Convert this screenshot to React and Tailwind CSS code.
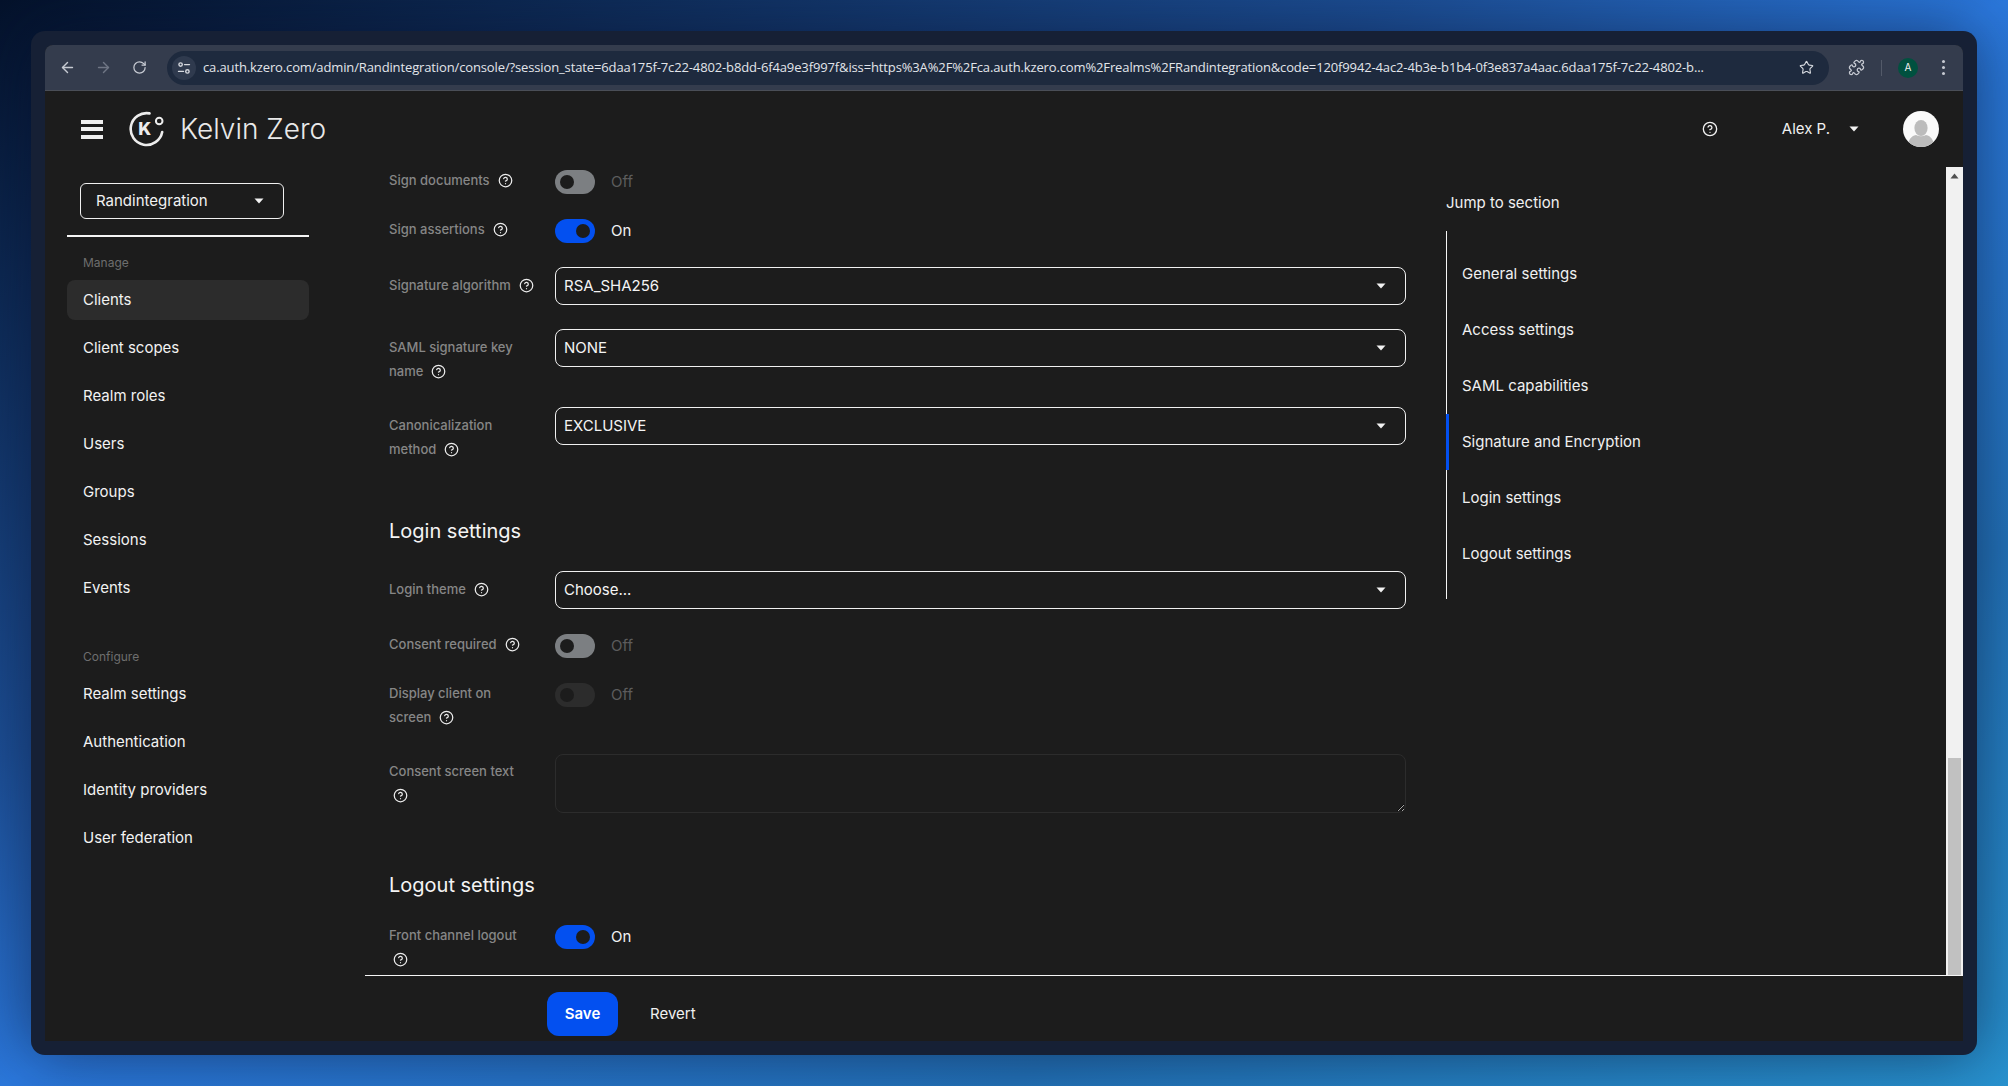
import React from "react";
import { ArrowLeft, ArrowRight, RotateCw, Star, Puzzle, CircleHelp } from "lucide-react";

const URL_TEXT =
  "ca.auth.kzero.com/admin/Randintegration/console/?session_state=6daa175f-7c22-4802-b8dd-6f4a9e3f997f&iss=https%3A%2F%2Fca.auth.kzero.com%2Frealms%2FRandintegration&code=120f9942-4ac2-4b3e-b1b4-0f3e837a4aac.6daa175f-7c22-4802-b...";

function Caret({ className = "" }) {
  return (
    <svg width="10" height="6" viewBox="0 0 10 6" className={className}>
      <path d="M0.5 0.5h9L5 5.5z" fill="#f2f2f2" />
    </svg>
  );
}

function Help({ className = "" }) {
  return <CircleHelp size={15} strokeWidth={2} className={"shrink-0 text-[#ececec] " + className} />;
}

function Toggle({ state, label }) {
  const track =
    state === "on" ? "bg-[#0350f0] justify-end" : state === "disabled" ? "bg-[#2c2c2c] justify-start" : "bg-[#7c7f82] justify-start";
  return (
    <div className="flex items-center gap-4 mt-[2px]">
      <div className={"w-10 h-6 rounded-full flex items-center px-[5px] " + track}>
        <div className="w-[14px] h-[14px] rounded-full bg-[#1c1c1c]" />
      </div>
      <span className={"text-[15px] leading-6 " + (state === "on" ? "text-[#f2f2f2]" : "text-[#5c5c5c]")}>{label}</span>
    </div>
  );
}

function Select({ value }) {
  return (
    <div className="h-[38px] w-[851px] border border-[#f0f0f0] rounded-[8px] flex items-center justify-between pl-2 pr-[19px] text-[15px] text-[#f4f4f4]">
      <span>{value}</span>
      <Caret />
    </div>
  );
}

function Row({ mt, labelPt, label, children }) {
  return (
    <div className={"grid grid-cols-[166px_851px] items-start " + mt}>
      <div className={"text-[13px] leading-6 text-[#868686] font-medium " + labelPt}>{label}</div>
      <div>{children}</div>
    </div>
  );
}

function Lbl({ text, gap = "ml-2" }) {
  return (
    <span className="flex items-center">
      {text && <span>{text}</span>}
      <Help className={gap} />
    </span>
  );
}

function NavItem({ text, active }) {
  return (
    <div className={"h-10 rounded-[8px] flex items-center pl-4 text-[15px] text-[#f2f2f2] " + (active ? "bg-[#2c2c2c]" : "")}>{text}</div>
  );
}

function Heading({ mt, children }) {
  return <h2 className={"text-[20px] leading-6 text-[#f4f4f4] font-normal " + mt}>{children}</h2>;
}

function JumpItem({ text, active }) {
  return (
    <div className={"h-14 -ml-px border-l-[3px] pl-[13px] flex items-center text-[15px] text-[#f0f0f0] " + (active ? "border-[#0350f0]" : "border-transparent")}>
      {text}
    </div>
  );
}

function Logo() {
  return (
    <svg width="37" height="36" viewBox="0 0 37 36" fill="none" className="shrink-0">
      <path d="M21.5 2.4A15.9 15.9 0 1 0 34.2 21" stroke="#ececec" strokeWidth="2.6" strokeLinecap="round" />
      <circle cx="31.2" cy="10" r="3.3" stroke="#ececec" strokeWidth="2" />
      <text x="10.3" y="24.4" fontSize="17.5" fontWeight="800" fill="#ececec" fontFamily="Inter, sans-serif">K</text>
    </svg>
  );
}

function Avatar() {
  return (
    <svg width="36" height="36" viewBox="0 0 36 36" className="shrink-0">
      <defs>
        <clipPath id="avatar-clip"><circle cx="18" cy="18" r="18" /></clipPath>
      </defs>
      <g clipPath="url(#avatar-clip)">
        <rect width="36" height="36" fill="#fafafa" />
        <ellipse cx="18" cy="17" rx="6.6" ry="8" fill="#bcbcbc" />
        <path d="M5 36c0-7 3-11 8-12 3 1.6 7 1.6 10 0 5 1 8 5 8 12z" fill="#bcbcbc" />
      </g>
    </svg>
  );
}

export default function App() {
  return (
    <div className="w-[2008px] h-[1086px] p-[31px] overflow-hidden bg-[linear-gradient(to_bottom_right,#04122b_0%,#1d4f96_35%,#2b78dc_50%,#2372b8_75%,#2892cf_100%)] font-['Inter',sans-serif]">
      <div className="w-full h-full rounded-[14px] bg-[#162035] p-[14px] shadow-[0_0_60px_rgba(5,15,40,0.55)]">
        <div className="w-full h-full flex flex-col bg-[#1c1c1c] rounded-t-[8px] overflow-hidden">
          {/* browser toolbar */}
          <div className="h-[46px] shrink-0 bg-[#343c4d] border-b border-[#4a4e57] flex items-center pl-[14px]">
            <ArrowLeft size={17} strokeWidth={2} className="text-[#c6cad2]" />
            <ArrowRight size={17} strokeWidth={2} className="text-[#6f7685] ml-[19px]" />
            <RotateCw size={15} strokeWidth={2} className="text-[#c6cad2] ml-5" />
            <div className="ml-[20px] w-[1662px] h-[34px] rounded-full bg-[#1e2a3e] flex items-center pl-[5px] pr-[15px]">
              <div className="w-6 h-6 rounded-full bg-[#2f3a4e] flex items-center justify-center shrink-0">
                <svg width="14" height="14" viewBox="0 0 14 14" fill="none" stroke="#d6d9df" strokeWidth="1.4" strokeLinecap="round">
                  <circle cx="3.6" cy="3.6" r="1.7" />
                  <path d="M7.5 3.6h5" />
                  <circle cx="10.4" cy="10.4" r="1.7" />
                  <path d="M1.5 10.4h5" />
                </svg>
              </div>
              <span className="ml-[7px] w-[1580px] whitespace-nowrap overflow-hidden font-['Open_Sans',sans-serif] text-[13px] text-[#e2e5ea] tracking-[-0.01em]">{URL_TEXT}</span>
              <Star size={15} strokeWidth={1.8} className="ml-auto text-[#d6d9df] shrink-0" />
            </div>
            <Puzzle size={17} strokeWidth={1.8} className="ml-[19px] text-[#c6cad2]" />
            <div className="ml-[16px] w-px h-4 bg-[#535a69]" />
            <div className="ml-4 w-5 h-5 rounded-full bg-[#00513f] flex items-center justify-center text-[10px] text-[#f0f0f0]">A</div>
            <div className="ml-[24px] flex flex-col gap-[3px]">
              <div className="w-[3px] h-[3px] rounded-full bg-[#c6cad2]" />
              <div className="w-[3px] h-[3px] rounded-full bg-[#c6cad2]" />
              <div className="w-[3px] h-[3px] rounded-full bg-[#c6cad2]" />
            </div>
          </div>

          {/* app header */}
          <div className="h-[76px] shrink-0 flex items-center pl-9 pr-6">
            <div className="flex flex-col gap-[3.5px] w-[22px]">
              <div className="h-1 bg-[#efefef]" />
              <div className="h-1 bg-[#efefef]" />
              <div className="h-1 bg-[#efefef]" />
            </div>
            <div className="ml-[25px]"><Logo /></div>
            <span className="ml-[15px] text-[28px] font-light text-[#e9e9e9] leading-none">Kelvin Zero</span>
            <CircleHelp size={16} strokeWidth={2} className="ml-auto text-[#f0f0f0]" />
            <span className="ml-[64px] text-[15px] text-[#f0f0f0]">Alex P.</span>
            <Caret className="ml-[19px]" />
            <div className="ml-[44px]"><Avatar /></div>
          </div>

          <div className="flex-1 min-h-0 flex">
            {/* sidebar */}
            <aside className="w-[320px] shrink-0 pl-[22px] pr-[56px] pt-4">
              <div className="ml-[13px] w-[204px] h-9 border border-[#f0f0f0] rounded-[6px] flex items-center justify-between pl-[15px] pr-[19px] text-[15px] text-[#f2f2f2]">
                <span>Randintegration</span>
                <Caret />
              </div>
              <div className="h-[2px] w-[242px] bg-[#f5f5f5] mt-4" />
              <div className="mt-[14px] mb-[5px] pl-4 h-6 leading-6 text-[12px] text-[#6e6e6e]">Manage</div>
              <div className="flex flex-col gap-2">
                <NavItem text="Clients" active />
                <NavItem text="Client scopes" />
                <NavItem text="Realm roles" />
                <NavItem text="Users" />
                <NavItem text="Groups" />
                <NavItem text="Sessions" />
                <NavItem text="Events" />
              </div>
              <div className="mt-[37px] mb-[5px] pl-4 h-6 leading-6 text-[12px] text-[#6e6e6e]">Configure</div>
              <div className="flex flex-col gap-2">
                <NavItem text="Realm settings" />
                <NavItem text="Authentication" />
                <NavItem text="Identity providers" />
                <NavItem text="User federation" />
              </div>
            </aside>

            {/* main */}
            <main className="flex-1 min-w-0 flex flex-col">
              <div className="h-[808px] flex border-b-0">
                <div className="flex-1 min-w-0 overflow-hidden flex pl-6">
                  <div className="w-[1017px] shrink-0 pt-px">
                    <Row mt="" labelPt="" label={<Lbl text="Sign documents" />}>
                      <Toggle state="off" label="Off" />
                    </Row>
                    <Row mt="mt-[23px]" labelPt="" label={<Lbl text="Sign assertions" />}>
                      <Toggle state="on" label="On" />
                    </Row>
                    <Row mt="mt-6" labelPt="pt-[6px]" label={<Lbl text="Signature algorithm" />}>
                      <Select value="RSA_SHA256" />
                    </Row>
                    <Row
                      mt="mt-6"
                      labelPt="pt-[6px]"
                      label={
                        <>
                          <div>SAML signature key</div>
                          <Lbl text="name" gap="ml-2" />
                        </>
                      }
                    >
                      <Select value="NONE" />
                    </Row>
                    <Row
                      mt="mt-6"
                      labelPt="pt-[6px]"
                      label={
                        <>
                          <div>Canonicalization</div>
                          <Lbl text="method" gap="ml-2" />
                        </>
                      }
                    >
                      <Select value="EXCLUSIVE" />
                    </Row>
                    <Heading mt="mt-[58px]">Login settings</Heading>
                    <Row mt="mt-7" labelPt="pt-[6px]" label={<Lbl text="Login theme" />}>
                      <Select value="Choose..." />
                    </Row>
                    <Row mt="mt-[23px]" labelPt="" label={<Lbl text="Consent required" />}>
                      <Toggle state="off" label="Off" />
                    </Row>
                    <Row
                      mt="mt-[23px]"
                      labelPt=""
                      label={
                        <>
                          <div>Display client on</div>
                          <Lbl text="screen" gap="ml-2" />
                        </>
                      }
                    >
                      <Toggle state="disabled" label="Off" />
                    </Row>
                    <Row
                      mt="mt-[25px]"
                      labelPt="pt-[5px]"
                      label={
                        <>
                          <div>Consent screen text</div>
                          <div className="h-6 flex items-center"><Help className="ml-1" /></div>
                        </>
                      }
                    >
                      <textarea readOnly className="block w-[851px] h-[59px] bg-transparent border border-[#2c2c2c] rounded-[8px] outline-none" />
                    </Row>
                    <Heading mt="mt-[60px]">Logout settings</Heading>
                    <Row
                      mt="mt-[26px]"
                      labelPt=""
                      label={
                        <>
                          <div>Front channel logout</div>
                          <div className="h-6 flex items-center"><Help className="ml-1" /></div>
                        </>
                      }
                    >
                      <Toggle state="on" label="On" />
                    </Row>
                  </div>
                  <div className="ml-10 pt-6 w-[300px] shrink-0">
                    <div className="text-[15px] leading-6 text-[#f0f0f0]">Jump to section</div>
                    <div className="mt-4 border-l border-[#f5f5f5] pt-[15px] pb-[17px]">
                      <JumpItem text="General settings" />
                      <JumpItem text="Access settings" />
                      <JumpItem text="SAML capabilities" />
                      <JumpItem text="Signature and Encryption" active />
                      <JumpItem text="Login settings" />
                      <JumpItem text="Logout settings" />
                    </div>
                  </div>
                </div>
                {/* scrollbar */}
                <div className="w-[17px] shrink-0 bg-[#f1f1f1] flex flex-col justify-between items-center">
                  <svg width="9" height="6" viewBox="0 0 9 6" className="mt-[6px]">
                    <path d="M4.5 0.5L8.5 5.5h-8z" fill="#505050" />
                  </svg>
                  <div className="w-[13px] h-[217px] bg-[#c1c1c1]" />
                </div>
              </div>
              <div className="h-px bg-[#f5f5f5]" />
              <div className="flex-1 flex items-start pl-[182px] pt-4">
                <button className="w-[71px] h-11 rounded-[12px] bg-[#0350f0] text-[15px] font-semibold text-white">Save</button>
                <button className="ml-8 h-11 text-[15px] text-[#f0f0f0]">Revert</button>
              </div>
            </main>
          </div>
        </div>
      </div>
    </div>
  );
}
